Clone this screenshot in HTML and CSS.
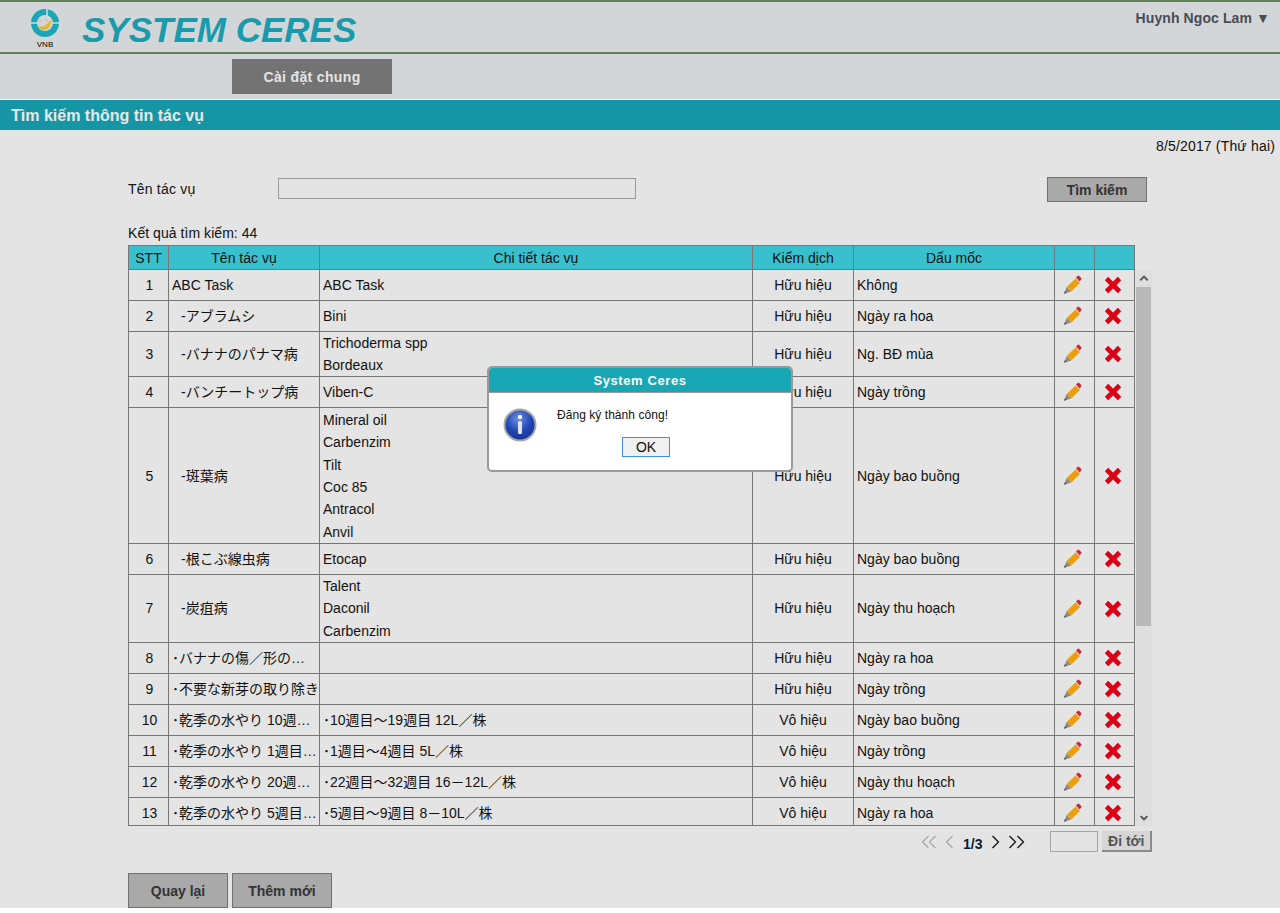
FILE: index.html
```html
<!DOCTYPE html>
<html lang="vi">

<head>
    <meta charset="UTF-8">
    <title>System Ceres</title>
    <link rel="stylesheet" href="styles.css">
</head>

<body>
    <svg class="defs" width="0" height="0">
        <defs>
            <radialGradient id="infoBlue" cx="45%" cy="30%" r="75%">
                <stop offset="0" stop-color="#6f8fe0" />
                <stop offset="0.55" stop-color="#2147b4" />
                <stop offset="1" stop-color="#14308f" />
            </radialGradient>
            <symbol id="pencil" viewBox="0 0 20 20">
                <path d="M1 18.8 3.6 12 8.2 16.4Z" fill="#8d8a84" />
                <path d="M1 18.8 2 16 3.800 17.800Z" fill="#55534f" />
                <path d="M3.600 12 12.600 3.600 17 8 8.200 16.400Z" fill="#ec9f0b" />
                <path d="M13 2.600 14.600 .9Q15.400 .3 16.200 1L18.200 3Q18.800 3.800 18.200 4.600L16.600 6.400Z" fill="#c9283c" />
            </symbol>
            <symbol id="cross" viewBox="0 0 20 20">
                <path d="M3.600 3.600 16.400 16.400M16.400 3.600 3.600 16.400" stroke="#b9b9b9" stroke-width="4.600" transform="translate(.5 .5)" />
                <path d="M3.500 3.500 16.500 16.500M16.500 3.500 3.500 16.500" stroke="#dd0015" stroke-width="4.600" />
            </symbol>
        </defs>
    </svg>

    <div class="page">
        <div class="header">
            <div class="logo">
                <svg width="30" height="30" viewBox="0 0 30 30">
                    <circle cx="15" cy="15" r="11" fill="none" stroke="#1aa6b6" stroke-width="6" />
                    <path d="M17 1V8M0 15H7M23 15H30" stroke="#d3d6d9" stroke-width="1.600" />
                    <path d="M8 18Q15 21 21 11Q22 21 14 22Q10 22 8 18Z" fill="#e3b82e" />
                    <path d="M9 13H12M15 12H18" stroke="#e3b82e" stroke-width="1" />
                </svg>
                <span class="logo-text">VNB</span>
            </div>
            <div class="brand">SYSTEM CERES</div>
            <div class="user">Huynh Ngoc Lam ▼</div>
        </div>

        <div class="nav">
            <a class="nav-item">Cài đặt chung</a>
        </div>

        <div class="title-bar">Tìm kiếm thông tin tác vụ</div>
        <div class="date">8/5/2017 (Thứ hai)</div>

        <div class="content">
            <div class="search">
                <label class="search-label">Tên tác vụ</label>
                <input class="search-input" type="text">
                <button class="btn btn-search">Tìm kiếm</button>
            </div>

            <div class="count">Kết quả tìm kiếm: 44</div>

            <table class="grid grid-head">
                <colgroup>
                    <col class="c-no"><col class="c-name"><col class="c-detail"><col class="c-state"><col class="c-mark"><col class="c-act"><col class="c-act">
                </colgroup>
                <tr>
                    <th>STT</th>
                    <th>Tên tác vụ</th>
                    <th>Chi tiết tác vụ</th>
                    <th>Kiểm dịch</th>
                    <th>Dấu mốc</th>
                    <th></th>
                    <th></th>
                </tr>
            </table>

            <div class="grid-wrap">
                <div class="grid-body">
                    <table class="grid">
                        <colgroup>
                            <col class="c-no"><col class="c-name"><col class="c-detail"><col class="c-state"><col class="c-mark"><col class="c-act"><col class="c-act">
                        </colgroup>
                        <tr>
                            <td class="no">1</td><td class="name">ABC Task</td><td>ABC Task</td><td class="center">Hữu hiệu</td><td>Không</td>
                            <td class="act"><svg class="ico"><use href="#pencil" /></svg></td><td class="act"><svg class="ico"><use href="#cross" /></svg></td>
                        </tr>
                        <tr>
                            <td class="no">2</td><td class="name sub">-アブラムシ</td><td>Bini</td><td class="center">Hữu hiệu</td><td>Ngày ra hoa</td>
                            <td class="act"><svg class="ico"><use href="#pencil" /></svg></td><td class="act"><svg class="ico"><use href="#cross" /></svg></td>
                        </tr>
                        <tr class="lines-2">
                            <td class="no">3</td><td class="name sub">-バナナのパナマ病</td><td>Trichoderma spp<br>Bordeaux</td><td class="center">Hữu hiệu</td><td>Ng. BĐ mùa</td>
                            <td class="act"><svg class="ico"><use href="#pencil" /></svg></td><td class="act"><svg class="ico"><use href="#cross" /></svg></td>
                        </tr>
                        <tr>
                            <td class="no">4</td><td class="name sub">-バンチートップ病</td><td>Viben-C</td><td class="center">Hữu hiệu</td><td>Ngày trồng</td>
                            <td class="act"><svg class="ico"><use href="#pencil" /></svg></td><td class="act"><svg class="ico"><use href="#cross" /></svg></td>
                        </tr>
                        <tr class="lines-6">
                            <td class="no">5</td><td class="name sub">-斑葉病</td><td>Mineral oil<br>Carbenzim<br>Tilt<br>Coc 85<br>Antracol<br>Anvil</td><td class="center">Hữu hiệu</td><td>Ngày bao buồng</td>
                            <td class="act"><svg class="ico"><use href="#pencil" /></svg></td><td class="act"><svg class="ico"><use href="#cross" /></svg></td>
                        </tr>
                        <tr>
                            <td class="no">6</td><td class="name sub">-根こぶ線虫病</td><td>Etocap</td><td class="center">Hữu hiệu</td><td>Ngày bao buồng</td>
                            <td class="act"><svg class="ico"><use href="#pencil" /></svg></td><td class="act"><svg class="ico"><use href="#cross" /></svg></td>
                        </tr>
                        <tr class="lines-3">
                            <td class="no">7</td><td class="name sub">-炭疽病</td><td>Talent<br>Daconil<br>Carbenzim</td><td class="center">Hữu hiệu</td><td>Ngày thu hoạch</td>
                            <td class="act"><svg class="ico"><use href="#pencil" /></svg></td><td class="act"><svg class="ico"><use href="#cross" /></svg></td>
                        </tr>
                        <tr>
                            <td class="no">8</td><td class="name">･バナナの傷／形の…</td><td></td><td class="center">Hữu hiệu</td><td>Ngày ra hoa</td>
                            <td class="act"><svg class="ico"><use href="#pencil" /></svg></td><td class="act"><svg class="ico"><use href="#cross" /></svg></td>
                        </tr>
                        <tr>
                            <td class="no">9</td><td class="name">･不要な新芽の取り除き</td><td></td><td class="center">Hữu hiệu</td><td>Ngày trồng</td>
                            <td class="act"><svg class="ico"><use href="#pencil" /></svg></td><td class="act"><svg class="ico"><use href="#cross" /></svg></td>
                        </tr>
                        <tr>
                            <td class="no">10</td><td class="name">･乾季の水やり 10週…</td><td>･10週目～19週目 12L／株</td><td class="center">Vô hiệu</td><td>Ngày bao buồng</td>
                            <td class="act"><svg class="ico"><use href="#pencil" /></svg></td><td class="act"><svg class="ico"><use href="#cross" /></svg></td>
                        </tr>
                        <tr>
                            <td class="no">11</td><td class="name">･乾季の水やり 1週目…</td><td>･1週目～4週目 5L／株</td><td class="center">Vô hiệu</td><td>Ngày trồng</td>
                            <td class="act"><svg class="ico"><use href="#pencil" /></svg></td><td class="act"><svg class="ico"><use href="#cross" /></svg></td>
                        </tr>
                        <tr>
                            <td class="no">12</td><td class="name">･乾季の水やり 20週…</td><td>･22週目～32週目 16－12L／株</td><td class="center">Vô hiệu</td><td>Ngày thu hoạch</td>
                            <td class="act"><svg class="ico"><use href="#pencil" /></svg></td><td class="act"><svg class="ico"><use href="#cross" /></svg></td>
                        </tr>
                        <tr>
                            <td class="no">13</td><td class="name">･乾季の水やり 5週目…</td><td>･5週目～9週目 8－10L／株</td><td class="center">Vô hiệu</td><td>Ngày ra hoa</td>
                            <td class="act"><svg class="ico"><use href="#pencil" /></svg></td><td class="act"><svg class="ico"><use href="#cross" /></svg></td>
                        </tr>
                    </table>
                </div>
                <div class="scrollbar">
                    <svg class="arrow" viewBox="0 0 17 17"><path d="M4.500 10.500 8.500 6.500 12.500 10.500" fill="none" stroke="#505050" stroke-width="2" /></svg>
                    <div class="thumb"></div>
                    <svg class="arrow arrow-end" viewBox="0 0 17 17"><path d="M5 7 8.500 10.500 12 7" fill="none" stroke="#505050" stroke-width="2" /></svg>
                </div>
            </div>

            <div class="pager">
                <svg class="chev" width="16" height="14" viewBox="0 0 16 14"><path d="M7.500 1 1.500 7 7.500 13M14.500 1 8.500 7 14.500 13" stroke="#aaa" /></svg>
                <svg class="chev" width="9" height="14" viewBox="0 0 9 14"><path d="M7.500 1 1.500 7 7.500 13" stroke="#aaa" /></svg>
                <span class="page-no">1/3</span>
                <svg class="chev" width="9" height="14" viewBox="0 0 9 14"><path d="M1.500 1 7.500 7 1.500 13" stroke="#111" /></svg>
                <svg class="chev" width="17" height="14" viewBox="0 0 17 14"><path d="M1.500 1 7.500 7 1.500 13M9.500 1 15.500 7 9.500 13" stroke="#111" /></svg>
                <input class="page-input" type="text">
                <button class="btn-go">Đi tới</button>
            </div>

            <div class="actions">
                <button class="btn btn-action">Quay lại</button>
                <button class="btn btn-action">Thêm mới</button>
            </div>
        </div>

        <div class="dialog">
            <div class="dialog-title">System Ceres</div>
            <div class="dialog-body">
                <svg class="dialog-icon" width="34" height="34" viewBox="0 0 34 34">
                    <circle cx="17" cy="17" r="15.500" fill="url(#infoBlue)" stroke="#a8a8a8" stroke-width="2" />
                    <circle cx="17" cy="9" r="2.200" fill="#f4f4f4" />
                    <rect x="15" y="13" width="4" height="13" rx="1.500" fill="#e4e4e4" />
                </svg>
                <div class="dialog-main">
                    <div class="dialog-msg">Đăng ký thành công!</div>
                    <button class="dialog-ok">OK</button>
                </div>
            </div>
        </div>
    </div>
</body>

</html>
```

FILE: styles.css
```css
html, body {
    margin: 0;
    padding: 0;
    background: #ffffff;
}

body {
    font-family: "Liberation Sans", "Noto Sans CJK JP", sans-serif;
    font-size: 14px;
    color: #111111;
}

.defs {
    position: absolute;
}

.page {
    position: relative;
    height: 908px;
    overflow: hidden;
    background: #e4e4e4;
}

/* Header */
.header {
    display: flex;
    height: 50px;
    border-top: 2px solid #5f7f55;
    border-bottom: 2px solid #5f7f55;
    background: #d3d6d9;
}

.logo {
    display: flex;
    flex-direction: column;
    align-items: center;
    width: 30px;
    margin: 6px 0 0 30px;
}

.logo-text {
    font-size: 8px;
    line-height: 9px;
    margin-top: 2px;
    color: #000000;
}

.brand {
    margin-left: 22px;
    font-size: 35px;
    line-height: 56px;
    font-weight: bold;
    font-style: italic;
    color: #1a9aaa;
}

.user {
    margin-left: auto;
    padding: 8px 10px 0 0;
    font-weight: bold;
    line-height: 16px;
    letter-spacing: 0.1px;
    color: #474c55;
}

.nav {
    height: 40px;
    padding: 5px 0 0 232px;
    background: #d3d6d9;
}

.nav-item {
    display: block;
    width: 160px;
    height: 35px;
    line-height: 37px;
    text-align: center;
    font-weight: bold;
    letter-spacing: 0.35px;
    background: #737373;
    color: #e4e4e4;
}

.title-bar {
    height: 29px;
    line-height: 30px;
    padding: 1px 0 0 11px;
    border-top: 1px solid #f2f2f2;
    font-size: 16px;
    font-weight: bold;
    background: #1696a5;
    color: #e8e8e8;
}

.date {
    padding: 8px 5px 0 0;
    line-height: 16px;
    letter-spacing: 0.17px;
    text-align: right;
}

/* Search */
.content {
    padding: 23px 0 0 128px;
}

.search {
    display: flex;
    align-items: flex-start;
    width: 1019px;
    height: 25px;
}

.search-label {
    width: 150px;
    line-height: 24px;
    letter-spacing: 0.2px;
}

.search-input {
    box-sizing: border-box;
    width: 358px;
    height: 21px;
    margin: 1px 0 0;
    border: 1px solid #999999;
    background: #e4e4e4;
}

.btn {
    box-sizing: border-box;
    border: 1px solid #707070;
    background: #a9a9a9;
    color: #333333;
    font-family: inherit;
    font-size: 14px;
    font-weight: bold;
    padding: 0;
}

.btn-search {
    width: 100px;
    height: 25px;
    margin-left: auto;
}

.count {
    margin: 21px 0 2px;
    line-height: 20px;
    letter-spacing: 0.05px;
}

/* Table */
.grid {
    table-layout: fixed;
    width: 1007px;
    border-collapse: separate;
    border-spacing: 0;
}

.c-no { width: 41px; }
.c-name { width: 151px; }
.c-detail { width: 433px; }
.c-state { width: 101px; }
.c-mark { width: 201px; }
.c-act { width: 40px; }

.grid th,
.grid td {
    border-right: 1px solid #777777;
    border-bottom: 1px solid #777777;
    padding: 0 3px;
    font-weight: normal;
    white-space: nowrap;
    overflow: hidden;
}

.grid th:first-child,
.grid td:first-child {
    border-left: 1px solid #777777;
}

.grid th {
    height: 23px;
    border-top: 1px solid #777777;
    background: #38c0cf;
    text-align: center;
}

.grid td {
    height: 30px;
    line-height: 22px;
}

.grid td.center {
    text-align: center;
}

.grid td.no {
    padding: 0 2px 0 4px;
    text-align: center;
}

.grid td.name {
    padding-left: 3px;
}

.grid td.name.sub {
    padding-left: 12px;
}

.grid td.act {
    padding: 0 5px 0 1px;
}

.lines-2 td { line-height: 22px; height: 44px; }
.lines-3 td { line-height: 22.33px; height: 67px; }

.grid .lines-6 td {
    line-height: 22.33px;
    height: 134px;
    padding-top: 1px;
}

.ico {
    display: block;
    width: 20px;
    height: 20px;
    margin: 0 auto;
}

.grid-wrap {
    display: flex;
    width: 1024px;
}

.grid-body {
    width: 1007px;
    height: 555px;
    overflow: hidden;
    border-bottom: 1px solid #777777;
}

.scrollbar {
    display: flex;
    flex-direction: column;
    width: 16px;
    margin-left: 1px;
    background: #dedede;
}

.arrow {
    display: block;
    width: 16px;
    height: 17px;
}

.arrow-end {
    margin-top: auto;
}

.thumb {
    width: 15px;
    height: 339px;
    background: #b9b9b9;
}

/* Pager */
.pager {
    display: flex;
    align-items: center;
    box-sizing: border-box;
    width: 1024px;
    height: 21px;
    margin-top: 5px;
    padding-left: 793px;
}

.chev {
    flex: none;
    fill: none;
    stroke-width: 1.3;
}

.chev + .chev {
    margin-left: 8px;
}

.page-no {
    margin: 5px 9px 0 9px;
    font-weight: bold;
    font-size: 14px;
    color: #0c1a33;
}

.page-input {
    box-sizing: border-box;
    width: 48px;
    height: 21px;
    margin: 0 0 0 25px;
    border: 1px solid #a5a5a5;
    background: #e4e4e4;
}

.btn-go {
    box-sizing: border-box;
    width: 50px;
    height: 21px;
    margin-left: 4px;
    padding: 0;
    border: none;
    border-right: 2px solid #8a8a8a;
    border-bottom: 2px solid #8a8a8a;
    background: #d6d6d6;
    color: #555555;
    font-family: inherit;
    font-size: 14px;
    font-weight: bold;
}

.actions {
    display: flex;
    gap: 4px;
    margin-top: 21px;
}

.btn-action {
    width: 100px;
    height: 35px;
}

/* Dialog */
.dialog {
    position: absolute;
    left: 487px;
    top: 366px;
    box-sizing: border-box;
    width: 306px;
    height: 106px;
    border: 2px solid #9a9a9a;
    border-radius: 5px;
    background: #ffffff;
    overflow: hidden;
}

.dialog-title {
    height: 24px;
    line-height: 25px;
    border-bottom: 1px solid #9a9a9a;
    text-align: center;
    font-size: 13px;
    font-weight: bold;
    letter-spacing: 0.6px;
    background: #17a7b5;
    color: #ffffff;
}

.dialog-body {
    display: flex;
    padding: 15px 0 0 14px;
}

.dialog-icon {
    flex: none;
}

.dialog-main {
    margin: -1px 0 0 20px;
    flex: 1;
}

.dialog-msg {
    font-size: 12px;
    line-height: 16px;
    letter-spacing: 0.05px;
}

.dialog-ok {
    display: block;
    box-sizing: border-box;
    width: 48px;
    height: 20px;
    margin: 14px 0 0 65px;
    padding: 0;
    border: 1px solid #3c8fe6;
    background: #f0f0f0;
    font-family: inherit;
    font-size: 14px;
    color: #111111;
}
```
